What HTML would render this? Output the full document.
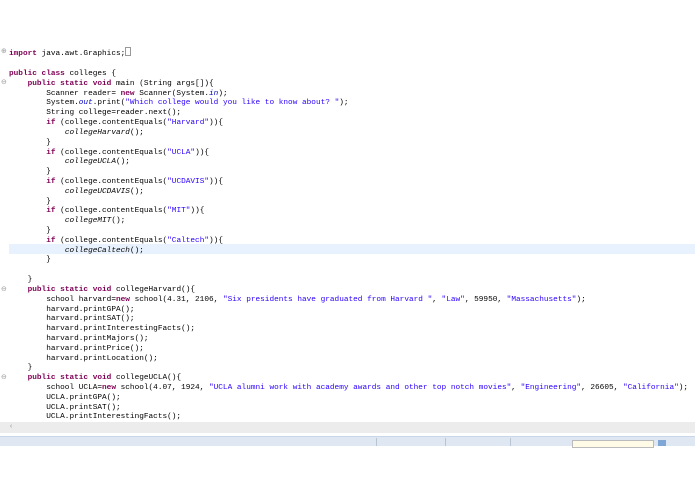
<!DOCTYPE html>
<html><head><style>
body{margin:0;width:695px;height:494px;background:#fff;overflow:hidden;position:relative;font-family:"Liberation Mono",monospace;}
pre{margin:0;font-family:"Liberation Mono",monospace;font-size:7.75px;line-height:9.82px;color:#000;position:absolute;left:9px;white-space:pre;}
.k{color:#7f0055;font-weight:bold}
.s{color:#2a00ff}
.i{font-style:italic}
.f{color:#0000c0;font-style:italic}
.hl{position:absolute;left:9px;right:0;top:244px;height:10px;background:#e8f2fe}
.m{position:absolute;left:1px;font-size:7px;color:#999;font-family:"DejaVu Sans",sans-serif}
</style></head><body>
<div class="hl"></div>
<div class="m" style="top:47px">⊕</div>
<div class="m" style="top:78px">⊖</div>
<div class="m" style="top:285px">⊖</div>
<div class="m" style="top:373px">⊖</div>
<pre style="top:47px;left:9px"><span class="k">import</span> java.awt.Graphics;<span style="border:1px solid #999;display:inline-block;width:4px;height:7px;vertical-align:-1px"></span></pre>
<pre style="top:70px"><span class="k">public class</span> colleges {
    <span class="k">public static void</span> main (String args[]){
        Scanner reader= <span class="k">new</span> Scanner(System.<span class="f">in</span>);
        System.<span class="f">out</span>.print(<span class="s">"Which college would you like to know about? "</span>);
        String college=reader.next();
        <span class="k">if</span> (college.contentEquals(<span class="s">"Harvard"</span>)){
            <span class="i">collegeHarvard</span>();
        }
        <span class="k">if</span> (college.contentEquals(<span class="s">"UCLA"</span>)){
            <span class="i">collegeUCLA</span>();
        }
        <span class="k">if</span> (college.contentEquals(<span class="s">"UCDAVIS"</span>)){
            <span class="i">collegeUCDAVIS</span>();
        }
        <span class="k">if</span> (college.contentEquals(<span class="s">"MIT"</span>)){
            <span class="i">collegeMIT</span>();
        }
        <span class="k">if</span> (college.contentEquals(<span class="s">"Caltech"</span>)){
            <span class="i">collegeCaltech</span>();
        }

    }
    <span class="k">public static void</span> collegeHarvard(){
        school harvard=<span class="k">new</span> school(4.31, 2106, <span class="s">"Six presidents have graduated from Harvard "</span>, <span class="s">"Law"</span>, 59950, <span class="s">"Massachusetts"</span>);
        harvard.printGPA();
        harvard.printSAT();
        harvard.printInterestingFacts();
        harvard.printMajors();
        harvard.printPrice();
        harvard.printLocation();
    }
    <span class="k">public static void</span> collegeUCLA(){
        school UCLA=<span class="k">new</span> school(4.07, 1924, <span class="s">"UCLA alumni work with academy awards and other top notch movies"</span>, <span class="s">"Engineering"</span>, 26605, <span class="s">"California"</span>);
        UCLA.printGPA();
        UCLA.printSAT();
        UCLA.printInterestingFacts();</pre>
<div style="position:absolute;left:0;right:0;top:422px;height:11px;background:#ececec"></div>
<div style="position:absolute;left:9px;top:423px;font-size:7px;color:#999">‹</div>
<div style="position:absolute;left:0;right:0;top:436px;height:1px;background:#c9d6ea"></div>
<div style="position:absolute;left:0;right:0;top:437px;height:9px;background:#dfe7f3"></div>
<div style="position:absolute;left:572px;top:440px;width:80px;height:6px;background:#fffbe6;border:1px solid #bbb"></div>
<div style="position:absolute;left:658px;top:440px;width:8px;height:6px;background:#7fa7d6"></div>
<div style="position:absolute;left:376px;top:438px;width:1px;height:8px;background:#b8c4d4"></div>
<div style="position:absolute;left:445px;top:438px;width:1px;height:8px;background:#b8c4d4"></div>
<div style="position:absolute;left:510px;top:438px;width:1px;height:8px;background:#b8c4d4"></div>
</body></html>
